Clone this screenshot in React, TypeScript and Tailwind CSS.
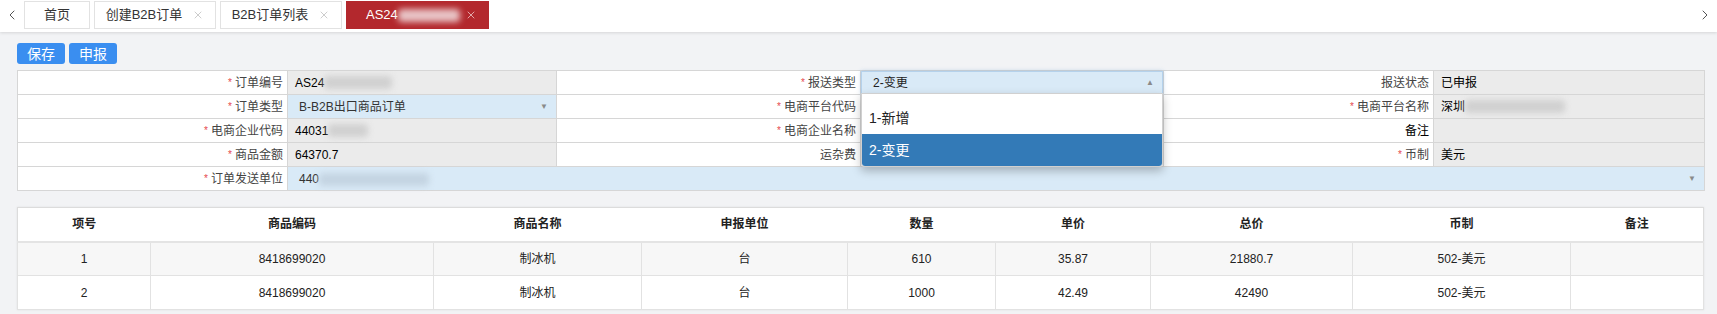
import React from 'react';
import { ChevronLeft, ChevronRight, X } from 'lucide-react';

type Cell = {
  label: string;
  required?: boolean;
  kind: 'gray' | 'blue' | 'white' | 'open';
  value?: React.ReactNode;
  span?: number;
};

const Blur = ({ w, tone = 'bg-[#d0d0d0]' }: { w: number; tone?: string }) => (
  <span
    className={`inline-block align-middle h-[13px] rounded-sm blur-[3px] ${tone}`}
    style={{ width: w }}
  />
);

const rows: Cell[][] = [
  [
    { label: '订单编号', required: true, kind: 'gray', value: <>AS24<Blur w={68} /></> },
    { label: '报送类型', required: true, kind: 'open', value: '2-变更' },
    { label: '报送状态', kind: 'gray', value: '已申报' },
  ],
  [
    { label: '订单类型', required: true, kind: 'blue', value: 'B-B2B出口商品订单' },
    { label: '电商平台代码', required: true, kind: 'white' },
    { label: '电商平台名称', required: true, kind: 'gray', value: <>深圳<Blur w={100} /></> },
  ],
  [
    { label: '电商企业代码', required: true, kind: 'gray', value: <>44031<Blur w={40} /></> },
    { label: '电商企业名称', required: true, kind: 'white' },
    { label: '备注', kind: 'gray' },
  ],
  [
    { label: '商品金额', required: true, kind: 'gray', value: '64370.7' },
    { label: '运杂费', kind: 'white' },
    { label: '币制', required: true, kind: 'gray', value: '美元' },
  ],
  [
    { label: '订单发送单位', required: true, kind: 'blue', span: 5, value: <>440<Blur w={110} tone="bg-[#c4d4e2]" /></> },
  ],
];

const items = [
  { no: 1, code: '8418699020', name: '制冰机', unit: '台', qty: '610', price: '35.87', total: '21880.7', curr: '502-美元' },
  { no: 2, code: '8418699020', name: '制冰机', unit: '台', qty: '1000', price: '42.49', total: '42490', curr: '502-美元' },
];

const heads = ['项号', '商品编码', '商品名称', '申报单位', '数量', '单价', '总价', '币制', '备注'];

const ValueCell = ({ cell }: { cell: Cell }) => {
  if (cell.kind === 'open') {
    return (
      <td className="p-0 border border-[#d6d6d6] bg-white">
        <div className="relative h-[23px]">
          <div className="h-full flex items-center justify-between pl-[11px] pr-[8px] bg-[#d9eaf7] border border-[#b5d2ec] shadow-[0_0_4px_rgba(80,140,200,0.35)]">
            <span className="text-[#222]">{cell.value}</span>
            <span className="text-[8px] text-[#8a8a8a]">▲</span>
          </div>
          <div className="absolute left-0 top-[22px] w-full z-10 bg-white pt-[8px] rounded-b-[3px] border border-[#d0d0d0] shadow-[0_4px_10px_rgba(0,0,0,0.25)]">
            <div className="h-[32px] flex items-center px-[7px] text-[14px] text-[#222]">1-新增</div>
            <div className="h-[32px] flex items-center px-[7px] text-[14px] text-white bg-[#337ab7] rounded-b-[3px]">2-变更</div>
          </div>
        </div>
      </td>
    );
  }
  if (cell.kind === 'blue') {
    return (
      <td colSpan={cell.span ?? 1} className="p-0 border border-[#d6d6d6] bg-[#d9eaf7]">
        <div className="h-[23px] flex items-center justify-between pl-[11px] pr-[8px]">
          <span className="text-[#333] whitespace-nowrap">{cell.value}</span>
          <span className="text-[8px] text-[#8a8a8a]">▼</span>
        </div>
      </td>
    );
  }
  return (
    <td className={`p-0 border border-[#d6d6d6] ${cell.kind === 'gray' ? 'bg-[#ebebeb]' : 'bg-white'}`}>
      <div className="h-[23px] flex items-center pl-[7px] text-black whitespace-nowrap">{cell.value}</div>
    </td>
  );
};

export default function App() {
  return (
    <div className="w-[1717px] h-[314px] overflow-hidden bg-[#f2f3f5] text-[12px] font-['Liberation_Sans','Noto_Sans_CJK_SC',sans-serif]">
      {/* Tabs */}
      <div className="h-[32px] bg-white flex items-start shadow-[0_1px_3px_rgba(0,0,0,0.12)] relative z-0">
        <div className="w-[24px] h-[30px] flex items-center justify-center text-[#555]">
          <ChevronLeft size={16} strokeWidth={1.5} />
        </div>
        <div className="flex gap-[4px] pt-[1px] flex-1">
          <div className="w-[66px] h-[28px] flex items-center justify-center border border-[#e2e2e2] bg-white text-[13px] text-[#333]">首页</div>
          <div className="w-[122px] h-[28px] flex items-center justify-center gap-[10px] border border-[#e2e2e2] bg-white text-[13px] text-[#333]">
            创建B2B订单 <X size={12} strokeWidth={1.5} className="text-[#bbb]" />
          </div>
          <div className="w-[122px] h-[28px] flex items-center justify-center gap-[10px] border border-[#e2e2e2] bg-white text-[13px] text-[#333]">
            B2B订单列表 <X size={12} strokeWidth={1.5} className="text-[#bbb]" />
          </div>
          <div className="w-[143px] h-[28px] flex items-center pl-[20px] pr-[12px] justify-between bg-[#b3282d] text-[13px] text-white">
            <span className="flex items-center">AS24<Blur w={62} tone="bg-[#e8c4c6]" /></span>
            <X size={12} strokeWidth={1.5} className="text-[#f1d3d3]" />
          </div>
        </div>
        <div className="w-[24px] h-[30px] flex items-center justify-center text-[#555]">
          <ChevronRight size={16} strokeWidth={1.5} />
        </div>
      </div>

      <div className="pl-[17px] pr-[13px] pt-[11px]">
        {/* Buttons */}
        <div className="flex gap-[4px]">
          <button className="w-[48px] h-[21px] rounded-[3px] bg-[#3a8ef0] text-white text-[14px] leading-none">保存</button>
          <button className="w-[48px] h-[21px] rounded-[3px] bg-[#3a8ef0] text-white text-[14px] leading-none">申报</button>
        </div>

        {/* Form */}
        <table className="mt-[6px] w-[1687px] table-fixed border-collapse">
          <colgroup>
            <col className="w-[270px]" />
            <col className="w-[269px]" />
            <col className="w-[304px]" />
            <col className="w-[303px]" />
            <col className="w-[270px]" />
            <col className="w-[271px]" />
          </colgroup>
          <tbody>
            {rows.map((row, i) => (
              <tr key={i}>
                {row.map((cell, j) => (
                  <React.Fragment key={j}>
                    <td className="p-0 border border-[#d6d6d6] bg-white">
                      <div className="h-[23px] flex items-center justify-end pr-[4px] text-[#444] whitespace-nowrap">
                        {cell.required && <span className="text-[#e5484d] text-[10px] mr-[3px]">*</span>}
                        <span className={cell.label === '备注' ? 'text-black' : ''}>{cell.label}</span>
                      </div>
                    </td>
                    <ValueCell cell={cell} />
                  </React.Fragment>
                ))}
              </tr>
            ))}
          </tbody>
        </table>

        {/* Items */}
        <table className="mt-[16px] w-[1686px] table-fixed border-collapse bg-white border border-[#dcdcdc] shadow-[0_0_2px_rgba(0,0,0,0.08)]">
          <colgroup>
            <col className="w-[133px]" />
            <col className="w-[283px]" />
            <col className="w-[208px]" />
            <col className="w-[206px]" />
            <col className="w-[148px]" />
            <col className="w-[155px]" />
            <col className="w-[202px]" />
            <col className="w-[218px]" />
            <col className="w-[133px]" />
          </colgroup>
          <thead>
            <tr className="h-[34px] border-b-2 border-[#e4e4e4]">
              {heads.map(h => (
                <th key={h} className="font-bold text-[12px] text-[#222] text-center">{h}</th>
              ))}
            </tr>
          </thead>
          <tbody>
            {items.map((it, i) => (
              <tr key={it.no} className={`h-[34px] ${i === 0 ? 'bg-[#f7f7f7]' : 'bg-white'}`}>
                {[it.no, it.code, it.name, it.unit, it.qty, it.price, it.total, it.curr, ''].map((v, k) => (
                  <td key={k} className="border border-[#e2e2e2] text-center text-[#222]">{v}</td>
                ))}
              </tr>
            ))}
          </tbody>
        </table>
      </div>
    </div>
  );
}
